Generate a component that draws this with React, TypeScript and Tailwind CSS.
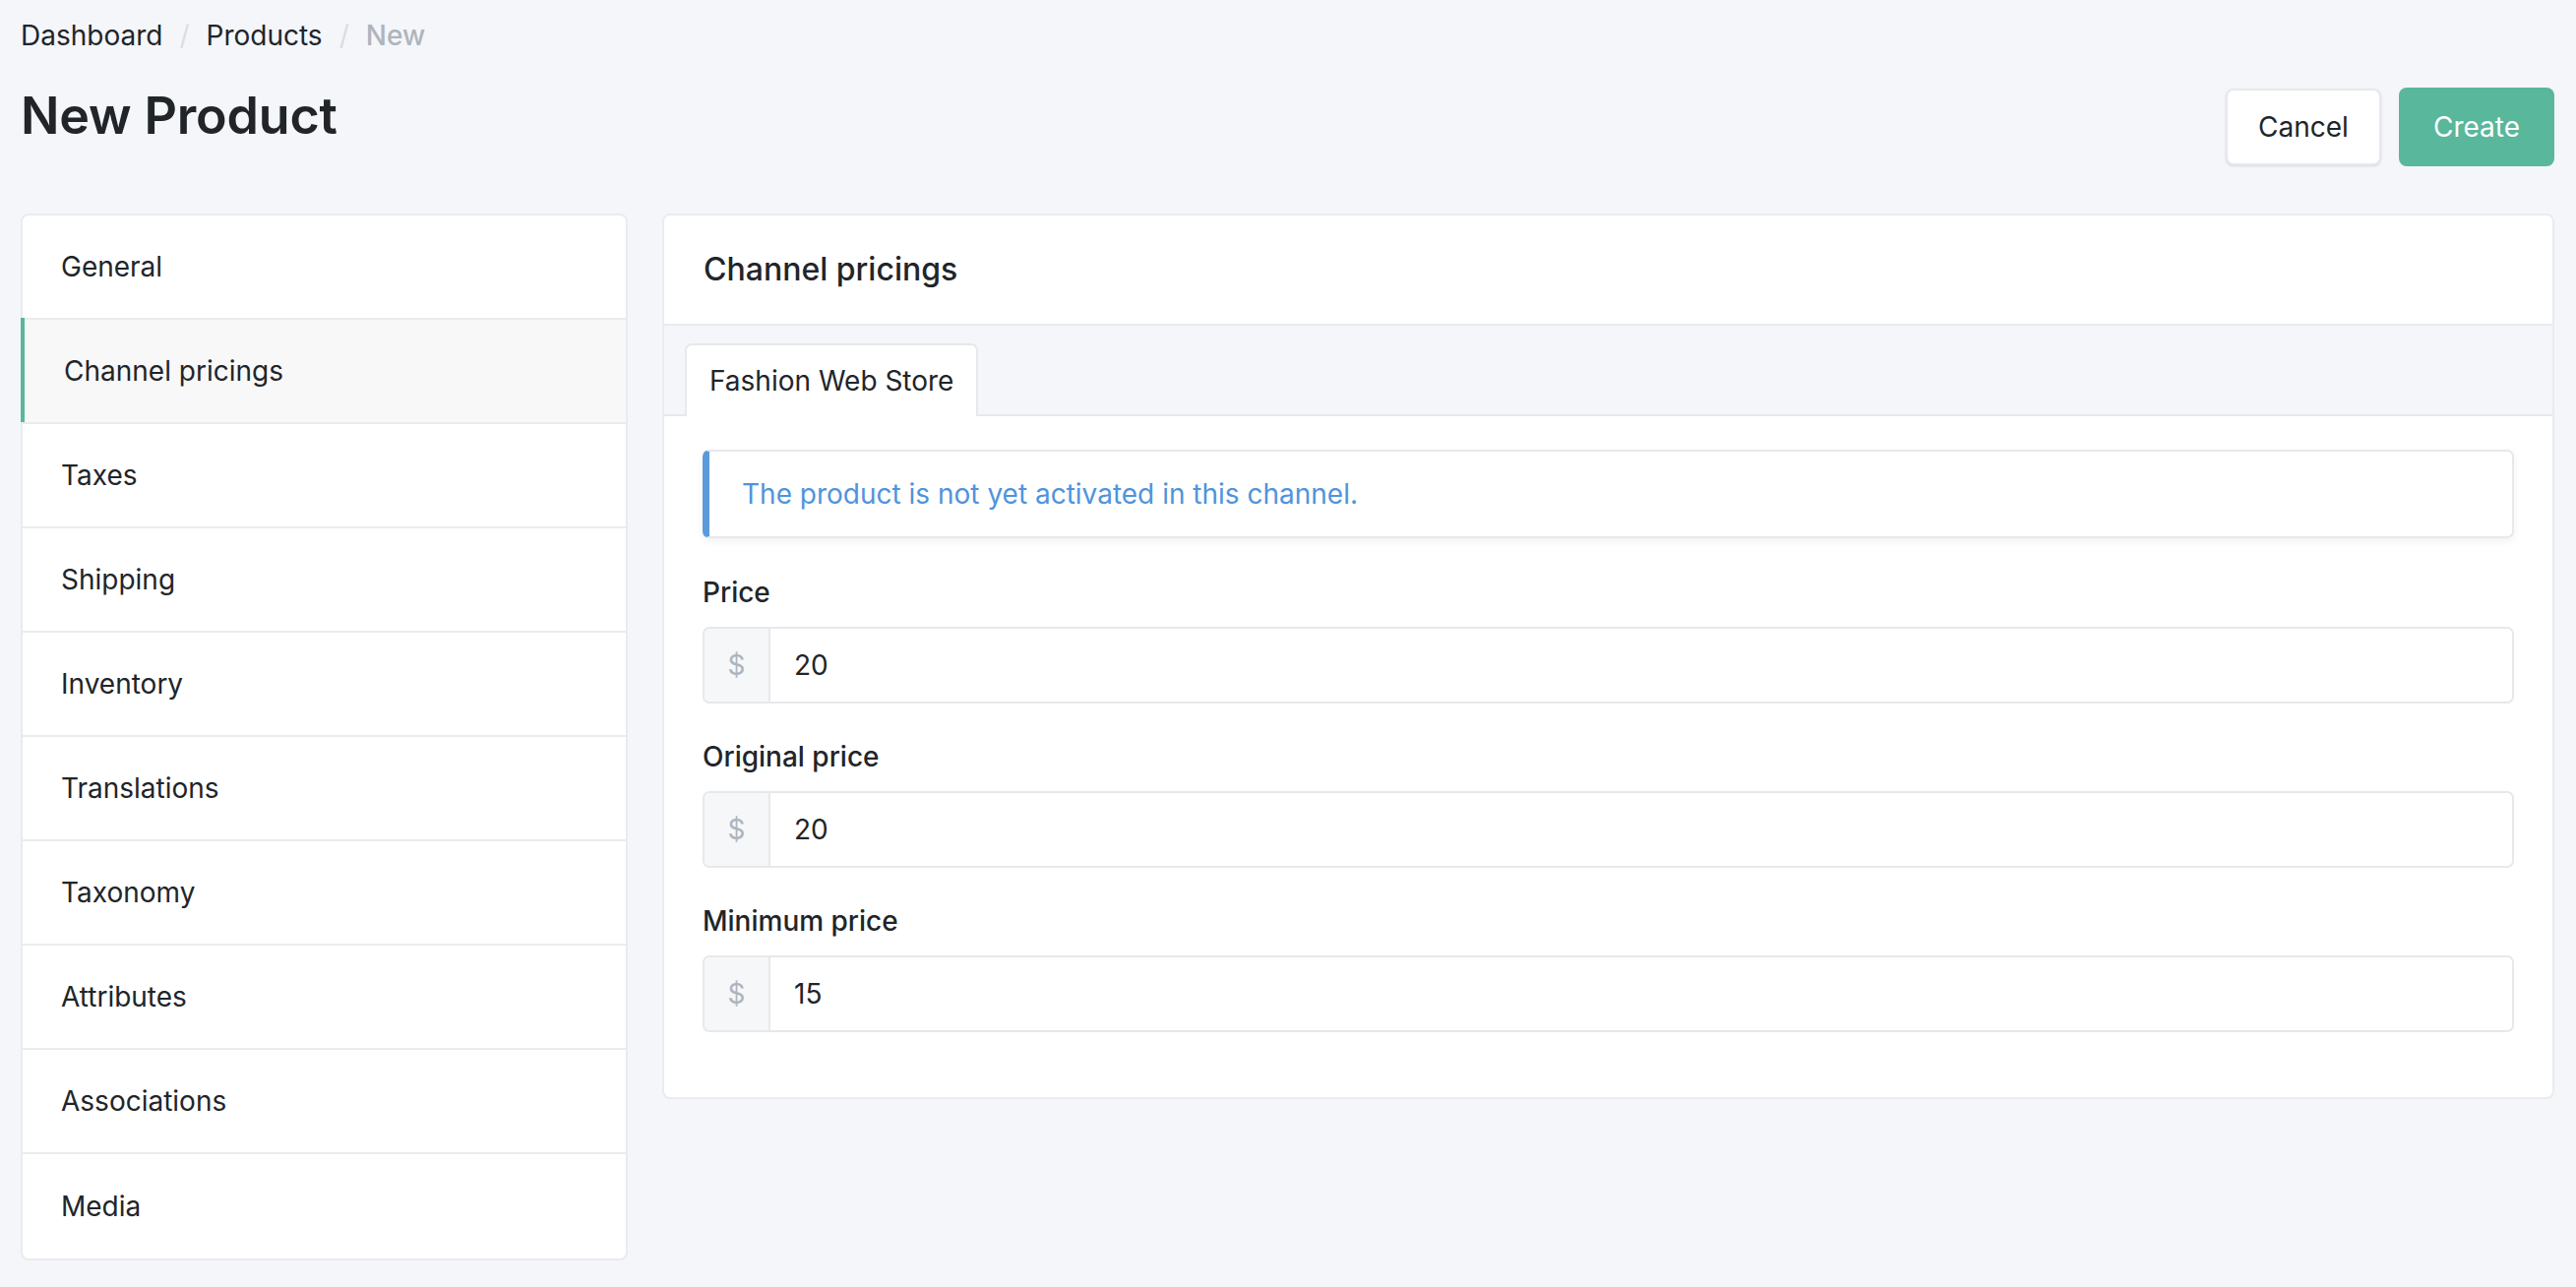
import React from "react";

const sections = [
  "General",
  "Channel pricings",
  "Taxes",
  "Shipping",
  "Inventory",
  "Translations",
  "Taxonomy",
  "Attributes",
  "Associations",
  "Media",
];

const prices = [
  { label: "Price", value: "20" },
  { label: "Original price", value: "20" },
  { label: "Minimum price", value: "15" },
];

function PriceField({ label, value, first }: { label: string; value: string; first?: boolean }) {
  return (
    <div className={first ? "mt-[34px]" : "mt-[33px]"}>
      <label className="block text-[28px] leading-[42px] font-medium text-[#212529]">{label}</label>
      <div className="mt-[14px] flex h-[78px] rounded-[7px] border-2 border-[#e6e8ec] bg-white">
        <span className="flex w-[67px] shrink-0 items-center justify-center rounded-l-[6px] border-r-2 border-[#e6e8ec] bg-[#f6f7f9] text-[28px] text-[#adb5bd]">
          $
        </span>
        <input
          type="text"
          defaultValue={value}
          className="min-w-0 flex-1 rounded-r-[6px] bg-white pl-[24px] text-[28px] text-[#212529] outline-none"
        />
      </div>
    </div>
  );
}

export default function App() {
  const active = "Channel pricings";

  return (
    <div
      className="min-h-screen w-full bg-[#f5f6fa] pl-[21px] pr-[22px] text-[#212529]"
      style={{ fontFamily: "Inter, 'Noto Sans', sans-serif" }}
    >
      {/* Breadcrumb */}
      <nav className="flex items-center pt-[16px] text-[28px] leading-[40px]">
        <span>Dashboard</span>
        <span className="mx-[17px] text-[#dadde1]">/</span>
        <span>Products</span>
        <span className="mx-[17px] text-[#dadde1]">/</span>
        <span className="font-medium text-[#adb5bd]">New</span>
      </nav>

      {/* Title row */}
      <div className="mt-[31px] flex items-start justify-between">
        <h1 className="text-[52px] font-semibold leading-[62px] tracking-[-0.2px] text-[#212529]">New Product</h1>
        <div className="mt-[2px] flex items-start gap-[18px]">
          <button
            type="button"
            className="mt-[1px] h-[78px] w-[158px] rounded-[8px] border-2 border-[#e6e8ec] bg-white text-[28px] text-[#212529] shadow-sm"
          >
            Cancel
          </button>
          <button
            type="button"
            className="h-[80px] w-[158px] rounded-[8px] bg-[#59b79b] text-[28px] text-white"
          >
            Create
          </button>
        </div>
      </div>

      {/* Body */}
      <div className="mt-[48px] flex items-start gap-[35px] pb-[30px]">
        {/* Sidebar */}
        <aside className="w-[617px] shrink-0 rounded-[8px] border-2 border-[#e9ebef] bg-white">
          {sections.map((s, i) => {
            const isActive = s === active;
            return (
              <div
                key={s}
                className={
                  "relative flex h-[106px] items-center text-[28px] " +
                  (i < sections.length - 1 ? "border-b-2 border-[#e9ebef] " : "") +
                  (isActive ? "bg-[#f8f8f9] pl-[42px]" : "pl-[39px]") +
                  (i === 0 ? " rounded-t-[6px]" : "") +
                  (i === sections.length - 1 ? " h-[104px] rounded-b-[6px]" : "")
                }
              >
                {isActive && <span className="absolute -left-[2px] -top-[2px] bottom-0 w-[4px] bg-[#59b79b]" />}
                {s}
              </div>
            );
          })}
        </aside>

        {/* Main card */}
        <section className="flex-1 rounded-[8px] border-2 border-[#e9ebef] bg-white">
          <div className="flex h-[112px] items-center border-b-2 border-[#e9ebef] pl-[40px] text-[32px] font-medium">
            Channel pricings
          </div>

          <div className="flex border-b-2 border-[#e6e8ec] bg-[#f5f6fa] px-[21px] pt-[18px]">
            <div className="-mb-[2px] flex h-[74px] items-center rounded-t-[7px] border-2 border-b-0 border-[#e6e8ec] bg-white px-[23px] text-[28px]">
              Fashion Web Store
            </div>
          </div>

          <div className="px-[39px] pb-[66px] pt-[34px]">
            <div className="flex h-[90px] items-center rounded-[7px] border-2 border-l-[7px] border-[#e6e8ec] border-l-[#5b9bdc] pl-[33px] text-[28px] text-[#4f94dc] shadow-[0_3px_8px_rgba(0,0,0,0.06)]">
              The product is not yet activated in this channel.
            </div>

            {prices.map((p, i) => (
              <PriceField key={p.label} label={p.label} value={p.value} first={i === 0} />
            ))}
          </div>
        </section>
      </div>
    </div>
  );
}
